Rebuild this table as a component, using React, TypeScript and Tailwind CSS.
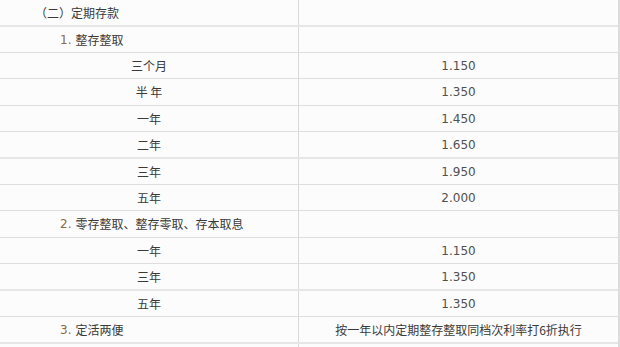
import React from "react";

type Row = {
  left: string;
  num?: string;
  right?: string;
  align: "head" | "sub" | "center";
  cls: string;
};

const THIN = "h-[26px] border-b border-[#dedede]";
const THIN27 = "h-[27px] border-b border-[#dedede]";
const THICK = "h-[27px] border-b-2 border-[#e6e6e6]";

const rows: Row[] = [
  { left: "（二）定期存款", align: "head", cls: THICK },
  { left: "整存整取", num: "1.", align: "sub", cls: THIN },
  { left: "三个月", right: "1.150", align: "center", cls: THIN },
  { left: "半 年", right: "1.350", align: "center", cls: THIN27 },
  { left: "一年", right: "1.450", align: "center", cls: THIN },
  { left: "二年", right: "1.650", align: "center", cls: THICK },
  { left: "三年", right: "1.950", align: "center", cls: THIN },
  { left: "五年", right: "2.000", align: "center", cls: THIN },
  { left: "零存整取、整存零取、存本取息", num: "2.", align: "sub", cls: THIN27 },
  { left: "一年", right: "1.150", align: "center", cls: THIN },
  { left: "三年", right: "1.350", align: "center", cls: THICK },
  { left: "五年", right: "1.350", align: "center", cls: THIN },
  {
    left: "定活两便",
    num: "3.",
    right: "按一年以内定期整存整取同档次利率打6折执行",
    align: "sub",
    cls: THICK,
  },
  { left: "", align: "center", cls: "h-[12px]" },
];

const isNum = (s: string) => /^[0-9.]+$/.test(s);

export default function App() {
  return (
    <div className="w-[620px] h-[347px] overflow-hidden bg-[#fcfcfc] text-[12px] text-[#3a3a3a] font-['Noto_Sans_CJK_SC','DejaVu_Sans',sans-serif]">
      <div className="w-[620px] border-r-2 border-[#dcdcdc]">
        {rows.map((r, i) => (
          <div key={i} className={"flex " + r.cls}>
            <div
              className={
                "w-[299px] shrink-0 border-r border-[#d9d9d9] flex items-center " +
                (r.align === "head"
                  ? "pl-[35px]"
                  : r.align === "sub"
                  ? "pl-[60px]"
                  : "justify-center")
              }
            >
              {r.num && (
                <span className="mr-[4px] text-[#8c6a45] font-['DejaVu_Sans',sans-serif]">
                  {r.num}
                </span>
              )}
              <span>{r.left}</span>
            </div>
            <div className="flex-1 flex items-center justify-center">
              {r.right && (
                <span
                  className={
                    isNum(r.right)
                      ? "text-[#505050] font-['DejaVu_Sans',sans-serif]"
                      : ""
                  }
                >
                  {r.right}
                </span>
              )}
            </div>
          </div>
        ))}
      </div>
    </div>
  );
}
